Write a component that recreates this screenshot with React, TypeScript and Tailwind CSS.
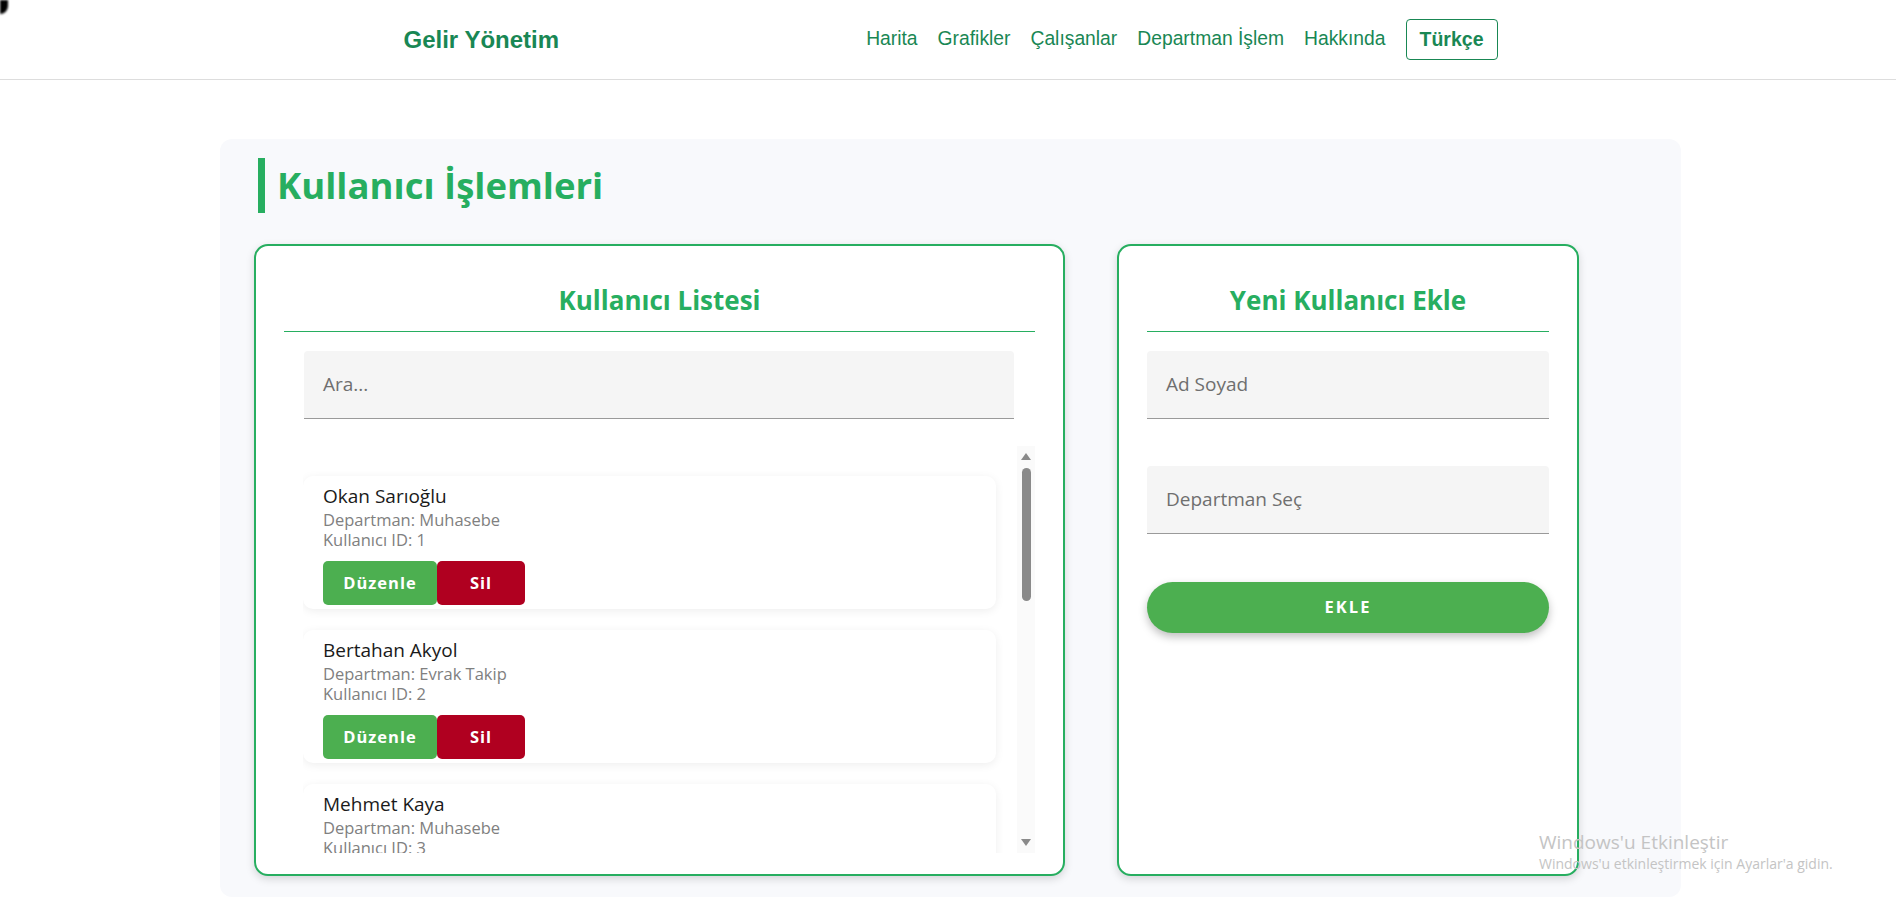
const users = [
  { name: "Okan Sarıoğlu", dept: "Muhasebe", id: 1 },
  { name: "Bertahan Akyol", dept: "Evrak Takip", id: 2 },
  { name: "Mehmet Kaya", dept: "Muhasebe", id: 3 },
];

const navLinks = ["Harita", "Grafikler", "Çalışanlar", "Departman İşlem", "Hakkında"];

const Header = () => {
  return (
    <header className="h-[80px] border-b border-[#dddddd] bg-white pl-[5px] font-['Liberation_Sans',Arial,sans-serif]">
      <div className="mx-auto flex h-full w-[1094px] items-center justify-between">
        <span className="text-[24px] font-bold text-[#198754]">Gelir Yönetim</span>
        <nav className="flex items-center">
          {navLinks.map((l) => (
            <a key={l} className="mr-[20px] text-[19.3px] text-[#198754]">
              {l}
            </a>
          ))}
          <button className="h-[41px] rounded-[4px] border border-[#198754] px-[13px] text-[19.5px] font-bold text-[#198754]">
            Türkçe
          </button>
        </nav>
      </div>
    </header>
  );
};

const Scrollbar = () => (
  <div className="flex w-[18px] flex-col items-center bg-[#fafafa] py-[7px]">
    <div className="h-0 w-0 border-x-[5px] border-b-[7px] border-x-transparent border-b-[#8a8a8a]"></div>
    <div className="mt-[8px] h-[133px] w-[9px] rounded-full bg-[#8a8a8a]"></div>
    <div className="flex-1"></div>
    <div className="h-0 w-0 border-x-[5px] border-t-[7px] border-x-transparent border-t-[#8a8a8a]"></div>
  </div>
);

const UserCard = ({ u }: { u: (typeof users)[number] }) => (
  <div className="shrink-0 rounded-[10px] bg-white px-[20px] pt-[6px] pb-[4px] shadow-[0_2px_10px_rgba(0,0,0,0.07)]">
    <div className="text-[19px] leading-[28px] text-[#1a1a1a]">{u.name}</div>
    <div className="text-[16.5px] leading-[20px] text-[#808080]">Departman: {u.dept}</div>
    <div className="text-[16.5px] leading-[20px] text-[#808080]">Kullanıcı ID: {u.id}</div>
    <div className="mt-[11px] flex">
      <button className="h-[44px] w-[114px] rounded-[5px] bg-[#4caf50] text-[16.5px] font-bold tracking-[1px] text-white">
        Düzenle
      </button>
      <button className="h-[44px] w-[88px] rounded-[5px] bg-[#b00020] text-[16.5px] font-bold tracking-[1px] text-white">
        Sil
      </button>
    </div>
  </div>
);

const FieldBox = ({ placeholder }: { placeholder: string }) => (
  <div className="flex h-[68px] items-center rounded-t-[4px] border-b border-[#9a9a9a] bg-[#f5f5f5] pl-[19px] text-[19px] text-[#6f6f6f]">
    {placeholder}
  </div>
);

const CardTitle = ({ children }: { children: React.ReactNode }) => (
  <div className="border-b border-[#27ae60] pb-[12px] text-center text-[26px] leading-[38px] font-bold text-[#27ae60]">
    {children}
  </div>
);

export default function App() {
  return (
    <div className="relative min-h-[921px] bg-white font-['Open_Sans','Noto_Sans',sans-serif]">
      <div className="absolute top-0 left-0 h-[14px] w-[8px] rounded-br-full bg-black blur-[1px]"></div>
      <Header />
      <div className="pl-[5px]">
        <main className="mx-auto mt-[59px] w-[1461px] rounded-[12px] bg-[#f8f9fc] px-[34px] pt-[19px] pb-[21px]">
          <h1 className="ml-[4px] border-l-[7px] border-[#27ae60] pl-[12px] text-[36.5px] leading-[55px] font-bold text-[#27ae60]">
            Kullanıcı İşlemleri
          </h1>
          <div className="mt-[31px] flex gap-[52px]">
            <section className="h-[632px] w-[811px] rounded-[14px] border-2 border-[#27ae60] bg-white px-[28px] pt-[35px] shadow-[0_3px_8px_rgba(0,0,0,0.15)]">
              <CardTitle>Kullanıcı Listesi</CardTitle>
              <div className="mt-[19px] ml-[20px] mr-[21px]">
                <FieldBox placeholder="Ara..." />
              </div>
              <div className="mt-[27px] ml-[19px] flex h-[407px]">
                <div className="flex flex-1 flex-col gap-[21px] overflow-hidden pt-[30px] pr-[21px]">
                  {users.map((u) => (
                    <UserCard key={u.id} u={u} />
                  ))}
                </div>
                <Scrollbar />
              </div>
            </section>
            <section className="h-[632px] w-[462px] rounded-[14px] border-2 border-[#27ae60] bg-white px-[28px] pt-[35px] shadow-[0_3px_8px_rgba(0,0,0,0.15)]">
              <CardTitle>Yeni Kullanıcı Ekle</CardTitle>
              <div className="mt-[19px]">
                <FieldBox placeholder="Ad Soyad" />
              </div>
              <div className="mt-[47px]">
                <FieldBox placeholder="Departman Seç" />
              </div>
              <button className="mt-[48px] h-[51px] w-full rounded-full bg-[#4caf50] text-[16.5px] font-bold tracking-[2px] text-white shadow-[0_4px_8px_rgba(0,0,0,0.25)]">
                EKLE
              </button>
            </section>
          </div>
        </main>
      </div>
      <div className="pointer-events-none absolute top-[829px] left-[1539px] font-['Open_Sans',sans-serif] text-[#c4c4c4]">
        <div className="text-[19px] leading-[26px]">Windows'u Etkinleştir</div>
        <div className="text-[14px] leading-[18px]">Windows'u etkinleştirmek için Ayarlar'a gidin.</div>
      </div>
    </div>
  );
}
